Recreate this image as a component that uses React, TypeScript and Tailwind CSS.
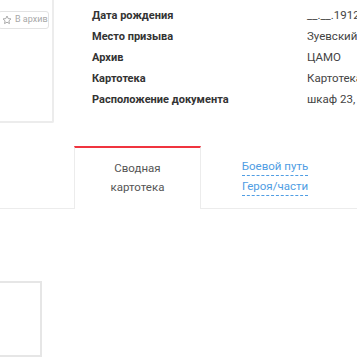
const rows: [string, string][] = [
  ["Дата рождения", "__.__.1912"],
  ["Место призыва", "Зуевский РВК"],
  ["Архив", "ЦАМО"],
  ["Картотека", "Картотека награждений"],
  ["Расположение документа", "шкаф 23, ящик 5"],
];

function Star() {
  return (
    <svg viewBox="0 0 24 24" className="h-[10px] w-[10px] shrink-0" fill="none" stroke="#9a9a9a" strokeWidth="2" strokeLinejoin="round">
      <path d="M12 2.5l2.9 6.1 6.6.8-4.9 4.6 1.3 6.6L12 17.3l-5.9 3.3 1.3-6.6-4.9-4.6 6.6-.8z" />
    </svg>
  );
}

export default function App() {
  return (
    <div className="relative h-[358px] w-[357px] overflow-hidden bg-white font-['Roboto',sans-serif]">
      <div className="flex">
        <div className="h-[123px] w-[54px] shrink-0 rounded-br-[2px] border-r-2 border-b-2 border-[#ececec] pt-[11px]">
          <div className="-ml-[2px] flex h-[18px] w-[51px] items-center gap-[3px] whitespace-nowrap rounded-[3px] border border-[#e3e3e3] pl-[3px] text-[9px] text-[#a8a8a8]">
            <Star />
            <span>В архив</span>
          </div>
        </div>
        <div className="ml-[38px] pt-[5px]">
          {rows.map(([label, value]) => (
            <div key={label} className="flex h-[21px] items-center whitespace-nowrap text-[11px] leading-none">
              <div className="w-[215px] font-bold text-[#333]">{label}</div>
              <div className="text-[11.5px] text-[#444]">{value}</div>
            </div>
          ))}
        </div>
      </div>

      <div className="mt-[23px] flex border-b border-[#ececec]">
        <div className="w-[74px] shrink-0" />
        <div className="-mb-px flex h-[63px] w-[127px] shrink-0 flex-col items-center border-x border-t-2 border-x-[#ececec] border-t-[#f0343f] bg-white pt-[11px] text-[11.5px] leading-[19px] text-[#555]">
          <span>Сводная</span>
          <span>картотека</span>
        </div>
        <div className="flex w-[148px] flex-col items-center pt-[12px] text-[11.5px] leading-[19px] text-[#4f9de3]">
          <span className="border-b border-dashed border-[#4f9de3] leading-[17px]">Боевой путь</span>
          <span className="mt-[2px] border-b border-dashed border-[#4f9de3] leading-[17px]">Героя/части</span>
        </div>
      </div>

      <div className="mt-[72px] h-[76px] w-[42px] border-y-2 border-r-2 border-[#e6e6e6]" />
    </div>
  );
}
